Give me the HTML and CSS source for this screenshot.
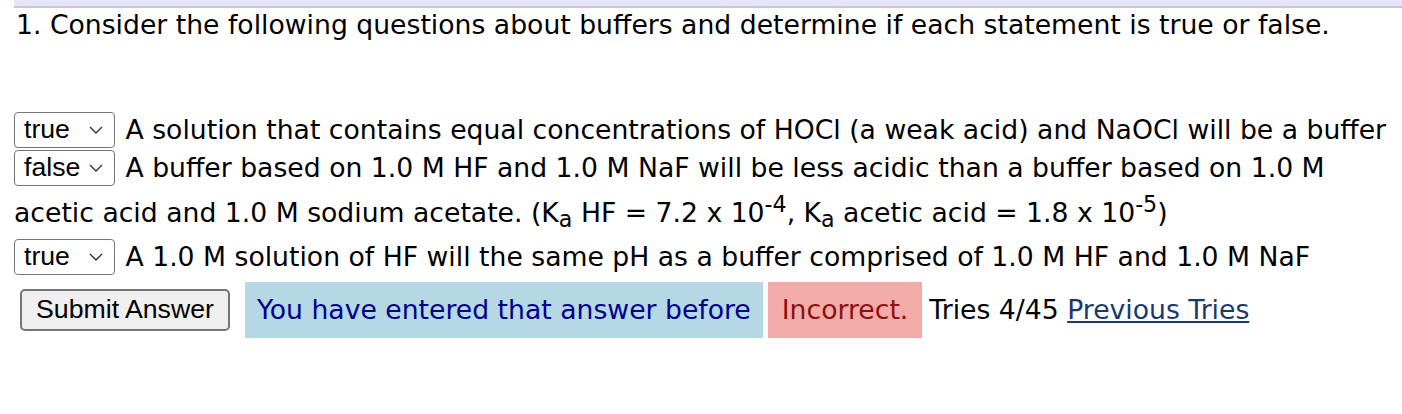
FILE: index.html
```html
<!DOCTYPE html>
<html>
<head>
<meta charset="utf-8">
<link rel="stylesheet" href="styles.css">
</head>
<body>
<div class="topbar"></div>
<div class="content">
  <p class="question">1. Consider the following questions about buffers and determine if each statement is true or false.</p>
  <div class="statements">
    <div class="stmt stmt-first"><span class="sel"><span class="sel-text">true</span><svg class="chev" viewBox="0 0 14 8" width="14" height="8"><path d="M1 1 L7 7 L13 1" fill="none" stroke="#333" stroke-width="1.4"/></svg></span> A solution that contains equal concentrations of HOCl (a weak acid) and NaOCl will be a buffer</div>
    <div class="stmt"><span class="sel"><span class="sel-text">false</span><svg class="chev" viewBox="0 0 14 8" width="14" height="8"><path d="M1 1 L7 7 L13 1" fill="none" stroke="#333" stroke-width="1.4"/></svg></span> A buffer based on 1.0 M HF and 1.0 M NaF will be less acidic than a buffer based on 1.0 M acetic acid and 1.0 M sodium acetate. (K<sub>a</sub> HF = 7.2 x 10<sup>-4</sup>, K<sub>a</sub> acetic acid = 1.8 x 10<sup>-5</sup>)</div>
    <div class="stmt"><span class="sel"><span class="sel-text">true</span><svg class="chev" viewBox="0 0 14 8" width="14" height="8"><path d="M1 1 L7 7 L13 1" fill="none" stroke="#333" stroke-width="1.4"/></svg></span> A 1.0 M solution of HF will the same pH as a buffer comprised of 1.0 M HF and 1.0 M NaF</div>
  </div>
  <div class="actions">
    <button class="submit" type="button">Submit Answer</button>
    <span class="msg msg-before">You have entered that answer before</span>
    <span class="msg msg-wrong">Incorrect.</span>
    <span class="tries">Tries 4/45 <a href="#" class="prev">Previous Tries</a></span>
  </div>
</div>
</body>
</html>
```

FILE: styles.css
```css
html, body {
  margin: 0;
  padding: 0;
  background: #ffffff;
}
body {
  font-family: "DejaVu Sans", Verdana, sans-serif;
  font-size: 26.67px;
  color: #000;
}
.topbar {
  margin-left: 14px;
  height: 6px;
  background: #e6e6fa;
  border-bottom: 2px solid #c8c8c8;
}
.content {
  padding-left: 16px;
}
.question {
  margin: 1px 0 0 0;
  line-height: 32px;
}
.statements {
  margin-top: 70px;
  margin-left: -2px;
}
.stmt {
  line-height: 44.5px;
}
.stmt-first {
  line-height: 38px;
  margin-bottom: -3px;
}
.sel {
  display: inline-flex;
  align-items: center;
  justify-content: space-between;
  box-sizing: border-box;
  width: 101px;
  height: 36px;
  padding: 0 11px 0 9px;
  margin-right: 2px;
  border: 1px solid #767676;
  border-radius: 4px;
  font-family: "Liberation Sans", Arial, sans-serif;
  font-size: 26.67px;
  vertical-align: middle;
  line-height: 1;
  background: #fff;
  margin-top: -4px;
}
.chev {
  display: block;
}
sub, sup {
  font-size: 0.83em;
  line-height: 0;
}
sup {
  vertical-align: 0.45em;
}
sub {
  vertical-align: -0.22em;
}
.actions {
  display: flex;
  align-items: center;
  margin-top: 2px;
}
.submit {
  margin-left: 4px;
  width: 210px;
  height: 42px;
  font-family: "Liberation Sans", Arial, sans-serif;
  font-size: 26.67px;
  background: #efefef;
  border: 2px solid #767676;
  border-radius: 5px;
  color: #000;
  padding: 0;
}
.msg {
  display: inline-flex;
  align-items: center;
  height: 56px;
  padding: 0 12px;
  box-sizing: border-box;
}
.msg-before {
  margin-left: 15px;
  background: #b5d8e4;
  color: #00008b;
}
.msg-wrong {
  margin-left: 5px;
  padding: 0 14px;
  background: #f3aba8;
  color: #8b1010;
}
.tries {
  margin-left: 7px;
}
.prev {
  color: #1b3a6b;
  text-decoration: underline;
}
```
